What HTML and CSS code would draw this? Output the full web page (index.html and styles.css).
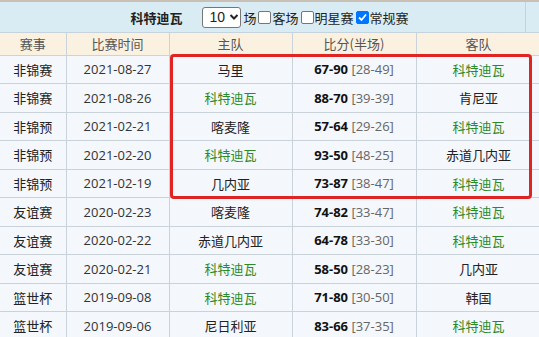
FILE: index.html
```html
<!DOCTYPE html>
<html>
<head>
<meta charset="utf-8">
<link rel="stylesheet" href="styles.css">
</head>
<body>
<div class="wrap">
  <div class="topbar">
    <div class="filter">
      <b class="team">科特迪瓦</b>
      <span class="select">10<svg width="10" height="8" viewBox="0 0 10 8"><path d="M1.5 2 L5 5.5 L8.5 2" fill="none" stroke="#222" stroke-width="2"/></svg></span>
      <span>场</span><span class="cb"></span><span>客场</span><span class="cb"></span><span>明星赛</span><span class="cb on"><svg width="11" height="11" viewBox="0 0 11 11"><path d="M2 5.5 L4.5 8 L9 2.5" fill="none" stroke="#fff" stroke-width="1.8"/></svg></span><span>常规赛</span>
    </div>
    <div class="side"></div>
  </div>
  <table class="games">
    <thead>
      <tr><th class="c1">赛事</th><th class="c2">比赛时间</th><th class="c3">主队</th><th class="c4">比分(半场)</th><th class="c5">客队</th></tr>
    </thead>
    <tbody>
      <tr><td>非锦赛</td><td class="num">2021-08-27</td><td>马里</td><td class="num"><b>67-90</b> <span class="half">[28-49]</span></td><td class="g">科特迪瓦</td></tr>
      <tr><td>非锦赛</td><td class="num">2021-08-26</td><td class="g">科特迪瓦</td><td class="num"><b>88-70</b> <span class="half">[39-39]</span></td><td>肯尼亚</td></tr>
      <tr><td>非锦预</td><td class="num">2021-02-21</td><td>喀麦隆</td><td class="num"><b>57-64</b> <span class="half">[29-26]</span></td><td class="g">科特迪瓦</td></tr>
      <tr><td>非锦预</td><td class="num">2021-02-20</td><td class="g">科特迪瓦</td><td class="num"><b>93-50</b> <span class="half">[48-25]</span></td><td>赤道几内亚</td></tr>
      <tr><td>非锦预</td><td class="num">2021-02-19</td><td>几内亚</td><td class="num"><b>73-87</b> <span class="half">[38-47]</span></td><td class="g">科特迪瓦</td></tr>
      <tr><td>友谊赛</td><td class="num">2020-02-23</td><td>喀麦隆</td><td class="num"><b>74-82</b> <span class="half">[33-47]</span></td><td class="g">科特迪瓦</td></tr>
      <tr><td>友谊赛</td><td class="num">2020-02-22</td><td>赤道几内亚</td><td class="num"><b>64-78</b> <span class="half">[33-30]</span></td><td class="g">科特迪瓦</td></tr>
      <tr><td>友谊赛</td><td class="num">2020-02-21</td><td class="g">科特迪瓦</td><td class="num"><b>58-50</b> <span class="half">[28-23]</span></td><td>几内亚</td></tr>
      <tr><td>篮世杯</td><td class="num">2019-09-08</td><td class="g">科特迪瓦</td><td class="num"><b>71-80</b> <span class="half">[30-50]</span></td><td>韩国</td></tr>
      <tr><td>篮世杯</td><td class="num">2019-09-06</td><td>尼日利亚</td><td class="num"><b>83-66</b> <span class="half">[37-35]</span></td><td class="g">科特迪瓦</td></tr>
    </tbody>
  </table>
  <div class="highlight"></div>
</div>
</body>
</html>
```
FILE: styles.css
```css
* { box-sizing: border-box; }
html, body { margin: 0; padding: 0; background: #fff; }
body {
  font-family: "Noto Sans CJK SC", "Noto Sans", sans-serif;
  font-size: 13px;
  color: #222;
}
.wrap {
  position: relative;
  width: 541px;
}
.topbar {
  display: flex;
  height: 33px;
  border-top: 2px solid #c8c0b4;
  background: #d9ecf4;
  border-bottom: 1px solid #c6d3dc;
}
.filter {
  width: 525px;
  display: flex;
  align-items: center;
  justify-content: center;
  padding-left: 14px;
}
.side {
  flex: 1;
  border-left: 1px solid #c6d3dc;
}
.team {
  font-weight: bold;
  margin-right: 20px;
}
.select {
  display: inline-flex;
  align-items: center;
  gap: 4px;
  height: 21px;
  width: 39px;
  padding-left: 6px;
  border: 1px solid #767676;
  border-radius: 3px;
  background: #fff;
  font-family: "Liberation Sans", sans-serif;
  font-size: 14px;
  margin-right: 2px;
}
.cb {
  display: inline-flex;
  align-items: center;
  justify-content: center;
  width: 13px;
  height: 13px;
  border: 1px solid #767676;
  border-radius: 2px;
  background: #fff;
  margin: 0 1px 0 2px;
}
.cb.on {
  background: #0075ff;
  border-color: #0075ff;
}
.games {
  border-collapse: collapse;
  width: 541px;
  table-layout: fixed;
}
.games th, .games td {
  border: 1px solid #cad2da;
  text-align: center;
  padding: 0;
  white-space: nowrap;
}
.games th {
  background: #fbf1e1;
  color: #555;
  font-weight: normal;
  height: 22px;
}
.games td {
  background: #f4f7fb;
  height: 28.5px;
  color: #222;
}
.games thead th { border-top: none; }
.games th:first-child, .games td:first-child { border-left: none; }
.c1 { width: 66px; }
.c2 { width: 103px; }
.c3 { width: 123px; }
.c4 { width: 124px; }
.c5 { width: 125px; }
.games td.num {
  font-family: "Open Sans", "Noto Sans", sans-serif;
  font-size: 13px;
  color: #333;
}
.num b { color: #111; font-weight: 700; }
.half { color: #666; }
.games td.g { color: #2a8a2a; }
.highlight {
  position: absolute;
  left: 170px;
  top: 54px;
  width: 362px;
  height: 145px;
  border: 3px solid #e02424;
  border-radius: 4px;
  pointer-events: none;
}
```
